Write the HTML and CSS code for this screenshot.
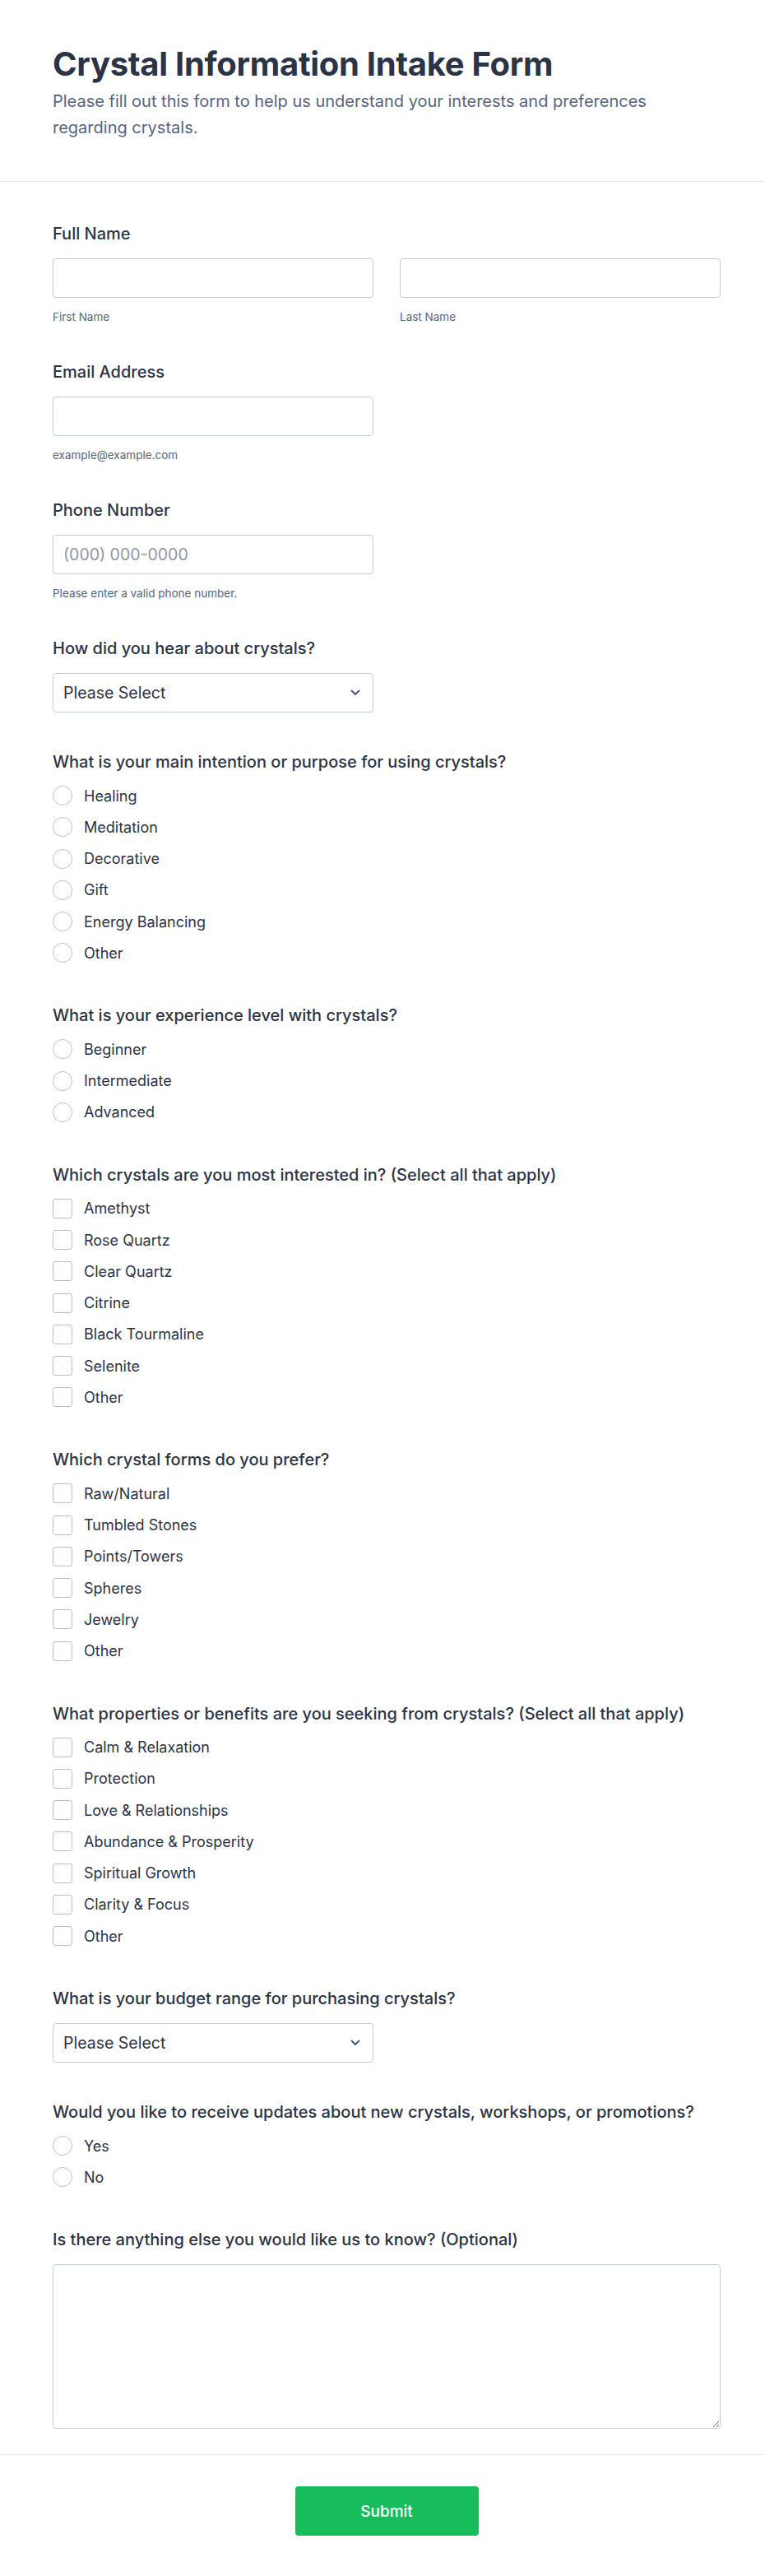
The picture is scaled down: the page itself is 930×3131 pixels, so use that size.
FILE: index.html
```html
<!DOCTYPE html>
<html lang="en">
<head>
<meta charset="utf-8">
<title>Crystal Information Intake Form</title>
<link rel="stylesheet" href="styles.css">
</head>
<body>
<form class="form">
  <header class="form-header">
    <h1 class="form-title">Crystal Information Intake Form</h1>
    <p class="form-subtitle">Please fill out this form to help us understand your interests and preferences regarding crystals.</p>
  </header>

  <div class="form-body">
    <div class="field">
      <label class="field-label">Full Name</label>
      <div class="name-row">
        <div class="name-col">
          <input class="text-input" type="text">
          <span class="sublabel">First Name</span>
        </div>
        <div class="name-col">
          <input class="text-input" type="text">
          <span class="sublabel">Last Name</span>
        </div>
      </div>
    </div>

    <div class="field">
      <label class="field-label">Email Address</label>
      <input class="text-input half" type="email">
      <span class="sublabel">example@example.com</span>
    </div>

    <div class="field">
      <label class="field-label">Phone Number</label>
      <input class="text-input half" type="tel" placeholder="(000) 000-0000">
      <span class="sublabel">Please enter a valid phone number.</span>
    </div>

    <div class="field">
      <label class="field-label">How did you hear about crystals?</label>
      <div class="select-wrap half">
        <select class="select"><option>Please Select</option></select>
        <svg class="chevron" viewBox="0 0 12 8" width="12" height="8"><path d="M1.5 1.5 L6 6 L10.5 1.5" fill="none" stroke="#4b5573" stroke-width="2" stroke-linecap="round" stroke-linejoin="round"/></svg>
      </div>
    </div>

    <div class="field">
      <label class="field-label">What is your main intention or purpose for using crystals?</label>
      <div class="options">
        <label class="option"><span class="radio"></span>Healing</label>
        <label class="option"><span class="radio"></span>Meditation</label>
        <label class="option"><span class="radio"></span>Decorative</label>
        <label class="option"><span class="radio"></span>Gift</label>
        <label class="option"><span class="radio"></span>Energy Balancing</label>
        <label class="option"><span class="radio"></span>Other</label>
      </div>
    </div>

    <div class="field">
      <label class="field-label">What is your experience level with crystals?</label>
      <div class="options">
        <label class="option"><span class="radio"></span>Beginner</label>
        <label class="option"><span class="radio"></span>Intermediate</label>
        <label class="option"><span class="radio"></span>Advanced</label>
      </div>
    </div>

    <div class="field">
      <label class="field-label">Which crystals are you most interested in? (Select all that apply)</label>
      <div class="options">
        <label class="option"><span class="checkbox"></span>Amethyst</label>
        <label class="option"><span class="checkbox"></span>Rose Quartz</label>
        <label class="option"><span class="checkbox"></span>Clear Quartz</label>
        <label class="option"><span class="checkbox"></span>Citrine</label>
        <label class="option"><span class="checkbox"></span>Black Tourmaline</label>
        <label class="option"><span class="checkbox"></span>Selenite</label>
        <label class="option"><span class="checkbox"></span>Other</label>
      </div>
    </div>

    <div class="field">
      <label class="field-label">Which crystal forms do you prefer?</label>
      <div class="options">
        <label class="option"><span class="checkbox"></span>Raw/Natural</label>
        <label class="option"><span class="checkbox"></span>Tumbled Stones</label>
        <label class="option"><span class="checkbox"></span>Points/Towers</label>
        <label class="option"><span class="checkbox"></span>Spheres</label>
        <label class="option"><span class="checkbox"></span>Jewelry</label>
        <label class="option"><span class="checkbox"></span>Other</label>
      </div>
    </div>

    <div class="field">
      <label class="field-label">What properties or benefits are you seeking from crystals? (Select all that apply)</label>
      <div class="options">
        <label class="option"><span class="checkbox"></span>Calm &amp; Relaxation</label>
        <label class="option"><span class="checkbox"></span>Protection</label>
        <label class="option"><span class="checkbox"></span>Love &amp; Relationships</label>
        <label class="option"><span class="checkbox"></span>Abundance &amp; Prosperity</label>
        <label class="option"><span class="checkbox"></span>Spiritual Growth</label>
        <label class="option"><span class="checkbox"></span>Clarity &amp; Focus</label>
        <label class="option"><span class="checkbox"></span>Other</label>
      </div>
    </div>

    <div class="field">
      <label class="field-label">What is your budget range for purchasing crystals?</label>
      <div class="select-wrap half">
        <select class="select"><option>Please Select</option></select>
        <svg class="chevron" viewBox="0 0 12 8" width="12" height="8"><path d="M1.5 1.5 L6 6 L10.5 1.5" fill="none" stroke="#4b5573" stroke-width="2" stroke-linecap="round" stroke-linejoin="round"/></svg>
      </div>
    </div>

    <div class="field">
      <label class="field-label">Would you like to receive updates about new crystals, workshops, or promotions?</label>
      <div class="options">
        <label class="option"><span class="radio"></span>Yes</label>
        <label class="option"><span class="radio"></span>No</label>
      </div>
    </div>

    <div class="field">
      <label class="field-label">Is there anything else you would like us to know? (Optional)</label>
      <textarea class="textarea"></textarea>
    </div>
  </div>

  <footer class="form-footer">
    <button class="submit" type="button">Submit</button>
  </footer>
</form>
</body>
</html>
```

FILE: styles.css
```css
* {
  box-sizing: border-box;
}

html, body {
  margin: 0;
  padding: 0;
  background: #ffffff;
}

body {
  font-family: Inter, "Noto Sans", "Liberation Sans", sans-serif;
  color: #2c3345;
}

.form {
  width: 930px;
}

.form-header {
  padding: 54px 54px 49px 64px;
  border-bottom: 1px solid #dcdfe8;
}

.form-title {
  margin: 0 0 5px;
  font-size: 40px;
  line-height: 48px;
  font-weight: 700;
  color: #2c3345;
  letter-spacing: -0.3px;
}

.form-subtitle {
  margin: 0;
  max-width: 760px;
  font-size: 20px;
  line-height: 32px;
  color: #57647e;
}

.form-body {
  padding: 51px 54px 31px 64px;
  display: flex;
  flex-direction: column;
  gap: 48px;
  border-bottom: 1px solid #e6e8ee;
}

.field {
  display: flex;
  flex-direction: column;
  align-items: flex-start;
}

.field-label {
  font-size: 20px;
  line-height: 24px;
  font-weight: 500;
  color: #2c3345;
  margin-bottom: 18px;
}

.name-row {
  display: flex;
  gap: 32px;
  width: 100%;
}

.name-col {
  flex: 1;
  display: flex;
  flex-direction: column;
}

.text-input {
  width: 100%;
  height: 48px;
  border: 1px solid #c3cad8;
  border-radius: 4px;
  padding: 0 12px;
  font-family: inherit;
  font-size: 19.5px;
  color: #2c3345;
  background: #fff;
  outline: none;
}

.text-input::placeholder {
  color: #8f96a3;
}

.half {
  width: 390px;
}

.sublabel {
  margin-top: 16px;
  font-size: 13.5px;
  line-height: 14px;
  color: #57647e;
}

.select-wrap {
  position: relative;
}

.select {
  width: 100%;
  height: 48px;
  border: 1px solid #c3cad8;
  border-radius: 4px;
  padding: 0 12px;
  font-family: inherit;
  font-size: 19.5px;
  color: #2c3345;
  background: #fff;
  appearance: none;
  -webkit-appearance: none;
  outline: none;
}

.chevron {
  position: absolute;
  right: 16px;
  top: 20px;
}

.options {
  display: flex;
  flex-direction: column;
  gap: 10.25px;
  margin: -3px 0 2px;
}

.option {
  display: flex;
  align-items: center;
  height: 28px;
  font-size: 18px;
  color: #2c3345;
  gap: 14px;
}

.radio {
  width: 24px;
  height: 24px;
  border: 1.5px solid #b8bfcc;
  border-radius: 50%;
  flex: none;
}

.checkbox {
  width: 24px;
  height: 24px;
  border: 1.5px solid #b8bfcc;
  border-radius: 3px;
  flex: none;
}

.textarea {
  width: 100%;
  height: 200px;
  border: 1px solid #c3cad8;
  border-radius: 4px;
  font-family: inherit;
  font-size: 18px;
  padding: 10px 12px;
  outline: none;
}

.form-footer {
  display: flex;
  justify-content: center;
  padding: 38px 54px 49px 64px;
}

.submit {
  width: 223px;
  height: 60px;
  border: none;
  border-radius: 4px;
  background: #18bd5b;
  color: #ffffff;
  font-family: inherit;
  font-size: 19px;
  font-weight: 500;
}
```
